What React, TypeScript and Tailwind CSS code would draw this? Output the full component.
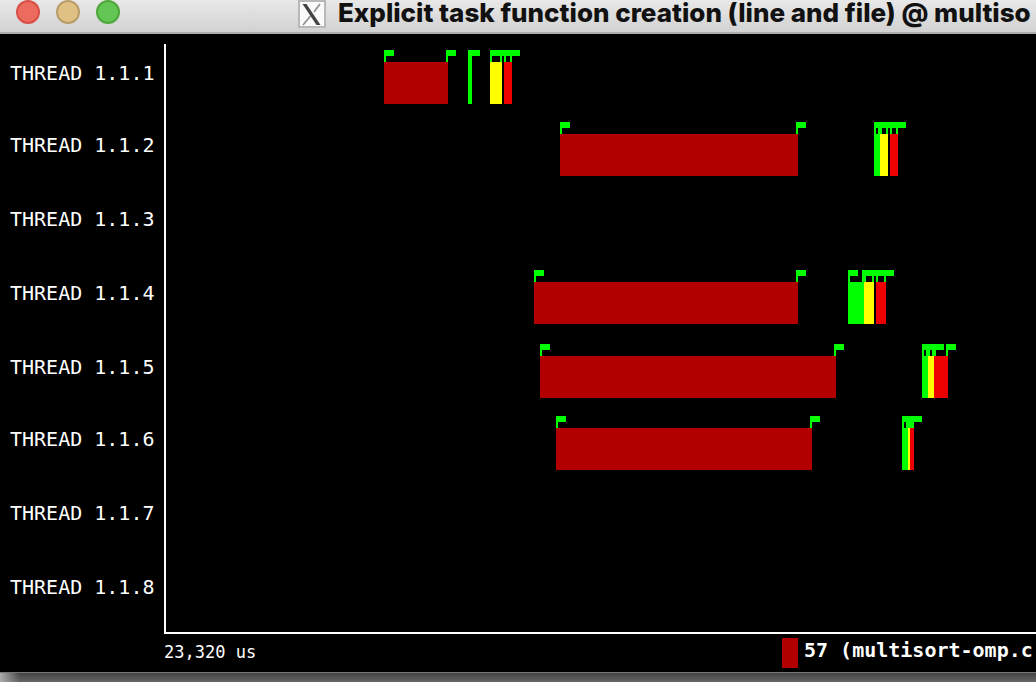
type Bar = { from: number; to: number; color: string };
type Thread = { name: string; height: string; bars: Bar[]; flags: number[] };

const CREATE = '#b20000';
const GREEN = '#00ff00';
const YELLOW = '#ffff00';
const RED = '#ec0000';

const threads: Thread[] = [
  {
    name: 'THREAD 1.1.1',
    height: 'h-[72px]',
    bars: [
      { from: 218, to: 282, color: CREATE },
      { from: 302, to: 306, color: GREEN },
      { from: 324, to: 336, color: YELLOW },
      { from: 338, to: 346, color: RED },
    ],
    flags: [218, 280, 302, 304, 324, 334, 338, 344],
  },
  {
    name: 'THREAD 1.1.2',
    height: 'h-[74px]',
    bars: [
      { from: 394, to: 632, color: CREATE },
      { from: 708, to: 714, color: GREEN },
      { from: 714, to: 722, color: YELLOW },
      { from: 724, to: 732, color: RED },
    ],
    flags: [394, 630, 708, 712, 714, 720, 724, 730],
  },
  { name: 'THREAD 1.1.3', height: 'h-[74px]', bars: [], flags: [] },
  {
    name: 'THREAD 1.1.4',
    height: 'h-[74px]',
    bars: [
      { from: 368, to: 632, color: CREATE },
      { from: 682, to: 698, color: GREEN },
      { from: 698, to: 708, color: YELLOW },
      { from: 710, to: 720, color: RED },
    ],
    flags: [368, 630, 682, 696, 698, 706, 710, 718],
  },
  {
    name: 'THREAD 1.1.5',
    height: 'h-[72px]',
    bars: [
      { from: 374, to: 670, color: CREATE },
      { from: 756, to: 762, color: GREEN },
      { from: 762, to: 768, color: YELLOW },
      { from: 768, to: 782, color: RED },
    ],
    flags: [374, 668, 756, 760, 762, 766, 768, 780],
  },
  {
    name: 'THREAD 1.1.6',
    height: 'h-[74px]',
    bars: [
      { from: 390, to: 646, color: CREATE },
      { from: 736, to: 742, color: GREEN },
      { from: 742, to: 744, color: YELLOW },
      { from: 744, to: 748, color: RED },
    ],
    flags: [390, 644, 736, 740, 742, 744, 746],
  },
  { name: 'THREAD 1.1.7', height: 'h-[74px]', bars: [], flags: [] },
  { name: 'THREAD 1.1.8', height: 'h-[74px]', bars: [], flags: [] },
];

function Timeline({ thread }: { thread: Thread }) {
  return (
    <svg className="h-full w-full" shapeRendering="crispEdges" role="img" aria-label={thread.name}>
      {thread.bars.map((b) => (
        <rect key={b.from} x={b.from} y={18} width={b.to - b.from} height={42} fill={b.color} />
      ))}
      {thread.flags.map((x) => (
        <path key={x} d={`M${x} 6h10v6h-8v6h-2z`} fill={GREEN} />
      ))}
    </svg>
  );
}

function XIcon() {
  return (
    <svg className="h-7 w-7 shrink-0" viewBox="0 0 28 28" aria-hidden="true">
      <rect x="1" y="1" width="26" height="26" fill="#fafafa" stroke="#b8b8b8" strokeWidth="2" />
      <path d="M22 4 L16 12 M12.500 16 L5 25" stroke="#8c8c8c" strokeWidth="1.6" />
      <path d="M4.500 4 H8.500 L22.500 25 H18.500 Z" fill="#444" />
    </svg>
  );
}

export default function App() {
  return (
    <div className="flex min-h-screen flex-col overflow-hidden bg-black text-white">
      <header className="flex h-[34px] items-start overflow-hidden border-b-2 border-[#a9adab] bg-linear-to-b from-[#e8e8e8] to-[#d2d2d2] pl-4">
        <div className="flex shrink-0 gap-4">
          <button type="button" aria-label="Close" className="size-6 rounded-full border-2 border-[#d95146] bg-[#ed6a5f]" />
          <button type="button" aria-label="Minimize" className="size-6 rounded-full border-2 border-[#b99d69] bg-[#dfc184]" />
          <button type="button" aria-label="Zoom" className="size-6 rounded-full border-2 border-[#4fa73c] bg-[#62c554]" />
        </div>
        <div className="ml-[178px] flex items-start gap-3">
          <XIcon />
          <h1 className="whitespace-nowrap font-['Inter',sans-serif] text-[26px] leading-[26px] font-extrabold text-[#111]">
            Explicit task function creation (line and file) @ multiso
          </h1>
        </div>
      </header>

      <main className="flex-1 pt-[10px] font-['DejaVu_Sans_Mono',monospace]">
        <div className="flex">
          <ul className="w-[164px] shrink-0 pl-[10px]">
            {threads.map((t) => (
              <li key={t.name} className={`${t.height} pt-[17px] text-[20px] leading-6 whitespace-nowrap`}>
                {t.name}
              </li>
            ))}
          </ul>
          <div className="min-w-0 flex-1 border-b-2 border-l-2 border-white">
            {threads.map((t) => (
              <div key={t.name} className={t.height}>
                <Timeline thread={t} />
              </div>
            ))}
          </div>
        </div>
        <div className="flex h-[38px] items-start overflow-hidden pl-[164px]">
          <span className="w-[618px] shrink-0 pt-[6px] text-[17px] leading-6 whitespace-nowrap">23,320 us</span>
          <div className="flex shrink-0 gap-[6px] pt-1">
            <span className="h-[30px] w-4 bg-[#b20000]" />
            <span className="text-[20px] leading-6 font-bold whitespace-nowrap">57 (multisort-omp.c</span>
          </div>
        </div>
      </main>

      <footer className="flex h-[10px] border-t border-[#777] bg-linear-to-b from-[#444] to-[#666]">
        <span className="w-5 bg-linear-to-r from-[#aaa] to-transparent" />
      </footer>
    </div>
  );
}
